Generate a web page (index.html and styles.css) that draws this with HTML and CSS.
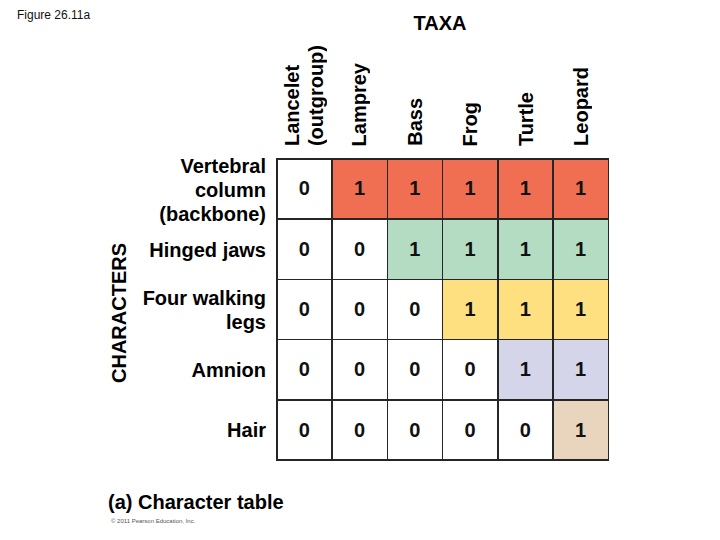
FILE: index.html
```html
<!DOCTYPE html>
<html lang="en">
<head>
<meta charset="utf-8">
<title>Figure 26.11a</title>
<link rel="stylesheet" href="styles.css">
</head>
<body>
<div class="figure">
  <div class="fig-label">Figure 26.11a</div>
  <div class="taxa">TAXA</div>

  <div class="col-heads">
    <div class="col-head"><span class="vtext">Lancelet<br>(outgroup)</span></div>
    <div class="col-head"><span class="vtext">Lamprey</span></div>
    <div class="col-head"><span class="vtext">Bass</span></div>
    <div class="col-head"><span class="vtext">Frog</span></div>
    <div class="col-head"><span class="vtext">Turtle</span></div>
    <div class="col-head"><span class="vtext">Leopard</span></div>
  </div>

  <div class="chars-label"><span class="vtext">CHARACTERS</span></div>

  <div class="row-labels">
    <div class="row-label">Vertebral<br>column<br>(backbone)</div>
    <div class="row-label">Hinged jaws</div>
    <div class="row-label">Four walking<br>legs</div>
    <div class="row-label">Amnion</div>
    <div class="row-label">Hair</div>
  </div>

  <div class="matrix">
    <div class="cell">0</div>
    <div class="cell red">1</div>
    <div class="cell red">1</div>
    <div class="cell red">1</div>
    <div class="cell red">1</div>
    <div class="cell red">1</div>

    <div class="cell">0</div>
    <div class="cell">0</div>
    <div class="cell green">1</div>
    <div class="cell green">1</div>
    <div class="cell green">1</div>
    <div class="cell green">1</div>

    <div class="cell">0</div>
    <div class="cell">0</div>
    <div class="cell">0</div>
    <div class="cell yellow">1</div>
    <div class="cell yellow">1</div>
    <div class="cell yellow">1</div>

    <div class="cell">0</div>
    <div class="cell">0</div>
    <div class="cell">0</div>
    <div class="cell">0</div>
    <div class="cell lavender">1</div>
    <div class="cell lavender">1</div>

    <div class="cell">0</div>
    <div class="cell">0</div>
    <div class="cell">0</div>
    <div class="cell">0</div>
    <div class="cell">0</div>
    <div class="cell tan">1</div>
  </div>

  <div class="caption">(a) Character table</div>
  <div class="copyright">© 2011 Pearson Education, Inc.</div>
</div>
</body>
</html>
```

FILE: styles.css
```css
html, body {
  margin: 0;
  padding: 0;
  background: #ffffff;
}

body {
  width: 720px;
  height: 540px;
  overflow: hidden;
  font-family: "Liberation Sans", Arial, sans-serif;
  color: #000;
}

.figure {
  display: grid;
  grid-template-columns: 109px 20px 147px 333px;
  grid-template-rows: 45px 113px 303px auto auto;
}

.fig-label {
  grid-column: 1 / 4;
  grid-row: 1;
  padding: 8px 0 0 17px;
  font-size: 12px;
  line-height: 14px;
  color: #111;
}

.taxa {
  grid-column: 4;
  grid-row: 1;
  padding: 11px 5px 0 0;
  text-align: center;
  font-size: 20px;
  line-height: 24px;
  font-weight: bold;
}

.vtext {
  writing-mode: vertical-rl;
  transform: rotate(180deg);
  font-size: 20px;
  line-height: 24px;
  font-weight: bold;
  white-space: nowrap;
}

.col-heads {
  grid-column: 4;
  grid-row: 2;
  display: grid;
  grid-template-columns: repeat(6, minmax(0, 1fr));
}

.col-head {
  display: flex;
  justify-content: center;
  align-items: flex-end;
  padding-bottom: 12px;
}

.chars-label {
  grid-column: 2;
  grid-row: 3;
  display: flex;
  justify-content: center;
  align-items: center;
  padding-top: 6px;
}

.chars-label .vtext {
  line-height: 20px;
}

.row-labels {
  grid-column: 3;
  grid-row: 3;
  display: grid;
  grid-template-rows: repeat(5, minmax(0, 1fr));
  padding: 1.5px 0;
}

.row-label {
  display: flex;
  align-items: center;
  justify-content: flex-end;
  text-align: right;
  padding-right: 10px;
  font-size: 20px;
  line-height: 24px;
  font-weight: bold;
  min-height: 0;
}

.matrix {
  grid-column: 4;
  grid-row: 3;
  display: grid;
  grid-template-columns: repeat(6, minmax(0, 1fr));
  grid-template-rows: repeat(5, minmax(0, 1fr));
  gap: 1.5px;
  padding: 1.5px;
  background: #262626;
}

.cell {
  display: flex;
  align-items: center;
  justify-content: center;
  background: #ffffff;
  font-size: 20px;
  font-weight: bold;
  color: #111;
}

.cell.red { background: #f06f52; }
.cell.green { background: #b4dcc3; }
.cell.yellow { background: #ffe081; }
.cell.lavender { background: #d5d5ea; }
.cell.tan { background: #e9d5bd; }

.caption {
  grid-column: 1 / 5;
  grid-row: 4;
  padding: 29px 0 0 108px;
  font-size: 20px;
  line-height: 24px;
  font-weight: bold;
}

.copyright {
  grid-column: 1 / 5;
  grid-row: 5;
  padding: 3px 0 0 111px;
  font-size: 6px;
  line-height: 8px;
  color: #555;
}
```
